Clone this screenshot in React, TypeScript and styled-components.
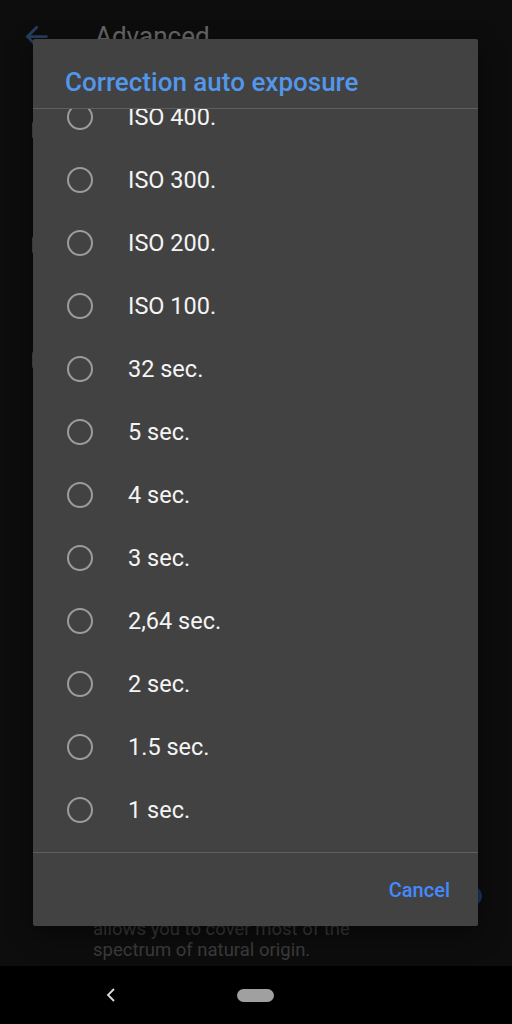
import { useLayoutEffect, useRef } from 'react'
import styled, { createGlobalStyle } from 'styled-components'

const options = [
  'ISO 800.',
  'ISO 400.',
  'ISO 300.',
  'ISO 200.',
  'ISO 100.',
  '32 sec.',
  '5 sec.',
  '4 sec.',
  '3 sec.',
  '2,64 sec.',
  '2 sec.',
  '1.5 sec.',
  '1 sec.',
]

const GlobalStyle = createGlobalStyle`
  html, body {
    margin: 0;
    padding: 0;
    background: #000;
  }
  body {
    font-family: Roboto, "Noto Sans", "Liberation Sans", sans-serif;
  }
`

export default function App() {
  const listRef = useRef<HTMLDivElement>(null)

  // the dialog list is scrolled down to its last entry
  useLayoutEffect(() => {
    const el = listRef.current
    if (el) el.scrollTop = el.scrollHeight
  }, [])

  return (
    <>
      <GlobalStyle />
      <Screen>
        <Page>
          <AppBar>
            <BackArrow viewBox="0 0 24 24">
              <path d="M20 11H7.83l5.59-5.59L12 4l-8 8 8 8 1.41-1.41L7.83 13H20v-2z" />
            </BackArrow>
            <PageTitle>Advanced</PageTitle>
          </AppBar>

          {[0, 1, 2].map((i) => (
            <SettingRow key={i}>
              <SettingIcon viewBox="0 0 24 24">
                <rect x="1" y="3" width="18" height="18" rx="3" />
              </SettingIcon>
            </SettingRow>
          ))}

          <Spacer />

          <GamutRow>
            <Description>
              allows you to cover most of the
              <br />
              spectrum of natural origin.
            </Description>
            <Switch viewBox="0 0 40 20">
              <rect x="2" y="3" width="34" height="14" rx="7" fill="#448aff" opacity="0.5" />
              <circle cx="30" cy="10" r="10" fill="#448aff" />
            </Switch>
          </GamutRow>

          <Scrim />

          <Dialog>
            <DialogTitle>Correction auto exposure</DialogTitle>
            <OptionList ref={listRef}>
              {options.map((o) => (
                <Option key={o}>
                  <Radio />
                  <OptionLabel>{o}</OptionLabel>
                </Option>
              ))}
            </OptionList>
            <Actions>
              <TextButton>Cancel</TextButton>
            </Actions>
          </Dialog>
        </Page>

        <NavBar>
          <NavBack viewBox="0 0 10 14">
            <polyline points="8,1 2,7 8,13" />
          </NavBack>
          <HomePill />
        </NavBar>
      </Screen>
    </>
  )
}

const Screen = styled.div`
  width: 512px;
  height: 1024px;
  display: flex;
  flex-direction: column;
  overflow: hidden;
`

const Page = styled.div`
  position: relative;
  flex: 1;
  display: flex;
  flex-direction: column;
  background: #212121;
  overflow: hidden;
`

const AppBar = styled.div`
  height: 72px;
  display: flex;
  align-items: center;
  padding-left: 20px;
  flex-shrink: 0;
`

const BackArrow = styled.svg`
  width: 33px;
  height: 33px;
  fill: #5c9ded;
`

const PageTitle = styled.div`
  margin-left: 42px;
  font-size: 26px;
  color: #fff;
`

const SettingRow = styled.div`
  height: 115px;
  display: flex;
  align-items: center;
  padding-left: 31px;
  flex-shrink: 0;
`

const SettingIcon = styled.svg`
  width: 24px;
  height: 24px;
  fill: #bdbdbd;
`

const Spacer = styled.div`
  flex: 1;
`

const GamutRow = styled.div`
  display: flex;
  padding: 0 30px 5px 93px;
`

const Description = styled.div`
  flex: 1;
  font-size: 18.5px;
  line-height: 21px;
  color: #929292;
`

const Switch = styled.svg`
  width: 40px;
  height: 20px;
  margin-top: -33px;
  flex-shrink: 0;
`

const Scrim = styled.div`
  position: absolute;
  inset: 0;
  background: rgba(0, 0, 0, 0.6);
`

const Dialog = styled.div`
  position: absolute;
  top: 39px;
  left: 33px;
  width: 445px;
  height: 887px;
  display: flex;
  flex-direction: column;
  background: #424242;
  border-radius: 2px;
  box-shadow: 0 8px 24px rgba(0, 0, 0, 0.5);
  overflow: hidden;
`

const DialogTitle = styled.div`
  height: 70px;
  box-sizing: border-box;
  padding: 28px 0 0 32px;
  border-bottom: 1px solid #5e5e5e;
  font-size: 26px;
  font-weight: 500;
  color: #5297ea;
  flex-shrink: 0;
`

const OptionList = styled.div`
  flex: 1;
  overflow-y: auto;
  padding-bottom: 11px;
  scrollbar-width: none;
  &::-webkit-scrollbar {
    display: none;
  }
`

const Option = styled.div`
  height: 63px;
  display: flex;
  align-items: center;
  padding-left: 34px;
`

const Radio = styled.div`
  width: 26px;
  height: 26px;
  box-sizing: border-box;
  border: 2px solid #9c9c9c;
  border-radius: 50%;
  flex-shrink: 0;
`

const OptionLabel = styled.div`
  margin-left: 35px;
  font-size: 23.5px;
  color: #f4f4f4;
`

const Actions = styled.div`
  height: 74px;
  box-sizing: border-box;
  border-top: 1px solid #5e5e5e;
  display: flex;
  align-items: center;
  justify-content: flex-end;
  padding-right: 28px;
  flex-shrink: 0;
`

const TextButton = styled.div`
  font-size: 20px;
  font-weight: 500;
  color: #448aff;
`

const NavBar = styled.div`
  height: 58px;
  background: #000;
  display: flex;
  align-items: center;
  padding-left: 106px;
  flex-shrink: 0;
`

const NavBack = styled.svg`
  width: 10px;
  height: 14px;
  fill: none;
  stroke: #dcdcdc;
  stroke-width: 1.8;
`

const HomePill = styled.div`
  margin-left: 121px;
  width: 37px;
  height: 13px;
  border-radius: 7px;
  background: #a0a0a0;
`
